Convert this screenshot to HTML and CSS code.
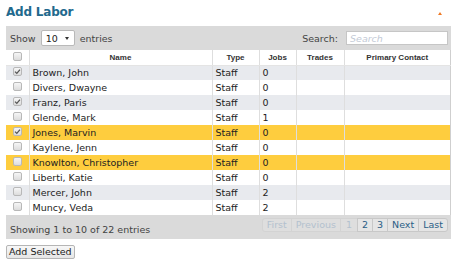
FILE: index.html
```html
<html>
    <head>
        <title>Add Labor</title>
        <link rel="stylesheet" href="styles.css">
    </head>

    <body>
        <div class="page">

            <div class="title-row">
                <h2 class="title">Add Labor</h2>
                <span class="caret"></span>
            </div>

            <div class="wrapper">

                <div class="controls">
                    <label class="length">Show
                        <span class="select-box"><select><option>10</option></select></span>
                        entries</label>
                    <label class="filter">Search: <input type="text" placeholder="Search"></label>
                </div>

                <table class="grid">
                    <colgroup>
                        <col style="width:23px">
                        <col style="width:183px">
                        <col style="width:47px">
                        <col style="width:37px">
                        <col style="width:48px">
                        <col>
                    </colgroup>
                    <thead>
                        <tr>
                            <th><span class="cb"></span></th>
                            <th>Name</th>
                            <th>Type</th>
                            <th>Jobs</th>
                            <th>Trades</th>
                            <th>Primary Contact</th>
                        </tr>
                    </thead>
                    <tbody>
                        <tr class="odd">
                            <td><span class="cb checked"><svg viewBox="0 0 9 9"><path d="M2 4.6 L3.8 6.4 L7 2.6"/></svg></span></td>
                            <td>Brown, John</td><td>Staff</td><td>0</td><td></td><td></td>
                        </tr>
                        <tr>
                            <td><span class="cb"></span></td>
                            <td>Divers, Dwayne</td><td>Staff</td><td>0</td><td></td><td></td>
                        </tr>
                        <tr class="odd">
                            <td><span class="cb checked"><svg viewBox="0 0 9 9"><path d="M2 4.6 L3.8 6.4 L7 2.6"/></svg></span></td>
                            <td>Franz, Paris</td><td>Staff</td><td>0</td><td></td><td></td>
                        </tr>
                        <tr>
                            <td><span class="cb"></span></td>
                            <td>Glende, Mark</td><td>Staff</td><td>1</td><td></td><td></td>
                        </tr>
                        <tr class="selected">
                            <td><span class="cb checked"><svg viewBox="0 0 9 9"><path d="M2 4.6 L3.8 6.4 L7 2.6"/></svg></span></td>
                            <td>Jones, Marvin</td><td>Staff</td><td>0</td><td></td><td></td>
                        </tr>
                        <tr>
                            <td><span class="cb"></span></td>
                            <td>Kaylene, Jenn</td><td>Staff</td><td>0</td><td></td><td></td>
                        </tr>
                        <tr class="selected">
                            <td><span class="cb"></span></td>
                            <td>Knowlton, Christopher</td><td>Staff</td><td>0</td><td></td><td></td>
                        </tr>
                        <tr>
                            <td><span class="cb"></span></td>
                            <td>Liberti, Katie</td><td>Staff</td><td>0</td><td></td><td></td>
                        </tr>
                        <tr class="odd">
                            <td><span class="cb"></span></td>
                            <td>Mercer, John</td><td>Staff</td><td>2</td><td></td><td></td>
                        </tr>
                        <tr>
                            <td><span class="cb"></span></td>
                            <td>Muncy, Veda</td><td>Staff</td><td>2</td><td></td><td></td>
                        </tr>
                    </tbody>
                </table>

                <div class="footer">
                    <div class="info">Showing 1 to 10 of 22 entries</div>
                    <div class="paging">
                        <span class="pg disabled">First</span>
                        <span class="pg disabled">Previous</span>
                        <span class="pg disabled current">1</span>
                        <span class="pg">2</span>
                        <span class="pg">3</span>
                        <span class="pg">Next</span>
                        <span class="pg">Last</span>
                    </div>
                </div>

            </div>

            <button class="add-btn">Add Selected</button>

        </div>
    </body>
</html>
```

FILE: styles.css
```css
body{
    margin: 0;
    background-color: white;
    font-family: "DejaVu Sans", Verdana, sans-serif;
    font-size: 9.5px;
    color: #222;
}

.page{
    padding-left: 6px;
    width: 445px;
}

.title-row{
    display: flex;
    justify-content: space-between;
    padding-top: 5px;
}

.title{
    margin: 0;
    font-size: 12px;
    line-height: 14px;
    letter-spacing: -0.2px;
    font-weight: bold;
    color: #22698d;
}

.caret{
    align-self: flex-end;
    margin: 0 9px 4px 0;
    width: 0;
    height: 0;
    border-left: 2.5px solid transparent;
    border-right: 2.5px solid transparent;
    border-bottom: 3px solid #ef7a26;
}

.wrapper{
    margin-top: 7px;
    background-color: #dadada;
}

.controls{
    display: flex;
    justify-content: space-between;
    align-items: center;
    height: 24px;
    padding: 0 3px 0 4px;
    color: #444;
}

.length{
    display: flex;
    align-items: center;
    gap: 5px;
}

.select-box{
    position: relative;
    display: inline-block;
}

.select-box select{
    appearance: none;
    width: 34px;
    height: 16px;
    padding: 0 0 0 4px;
    border: 1px solid #b9b9b9;
    border-radius: 2px;
    background: white;
    font-family: "DejaVu Sans", Verdana, sans-serif;
    font-size: 9.5px;
    color: #222;
}

.select-box::after{
    content: "";
    position: absolute;
    right: 6px;
    top: 7px;
    border-left: 2px solid transparent;
    border-right: 2px solid transparent;
    border-top: 3px solid #333;
}

.filter{
    display: flex;
    align-items: center;
    gap: 8px;
}

.filter input{
    width: 102px;
    height: 14px;
    padding: 0 3px;
    border: 1px solid #c6c6c6;
    background: white;
    outline: none;
    font-family: "DejaVu Sans", Verdana, sans-serif;
    font-size: 9.5px;
}

.filter input::placeholder{
    color: #c3cad6;
    font-style: italic;
}

.grid{
    width: 100%;
    table-layout: fixed;
    border-collapse: collapse;
    background-color: white;
    border-right: 1px solid #cfcfcf;
    font-family: "DejaVu Sans", Verdana, sans-serif;
    font-size: 9.5px;
    color: #222;
}

.grid th{
    height: 15px;
    padding: 0;
    font-family: "Liberation Sans", Arial, sans-serif;
    font-size: 8px;
    font-weight: bold;
    color: #333;
    text-align: center;
    border-left: 1px solid #dedede;
    border-bottom: 1px solid #e4e4e4;
}

.grid td{
    height: 15px;
    padding: 0 3px;
    border-left: 1px solid #dedede;
    white-space: nowrap;
    overflow: hidden;
    font-size: 9.5px;
    line-height: 12px;
}

.grid th:first-child,
.grid td:first-child{
    border-left: none;
    text-align: center;
    padding: 0;
}

.grid tr.odd td{
    background-color: #e8eaee;
}

.grid tr.selected td{
    background-color: #fecd3e;
}

.cb{
    display: inline-block;
    vertical-align: middle;
    width: 7px;
    height: 7px;
    border: 1px solid #b8b8b8;
    border-radius: 2px;
    background: linear-gradient(#f6f6f6, #dcdcdc);
    position: relative;
    top: -1px;
}

.cb svg{
    display: block;
    width: 9px;
    height: 9px;
    margin: -1px;
}

.cb svg path{
    fill: none;
    stroke: #555;
    stroke-width: 1.3;
}

.footer{
    display: flex;
    justify-content: space-between;
    align-items: flex-start;
    height: 24px;
    padding: 0 3px 0 4px;
}

.info{
    margin-top: 9px;
    color: #444;
}

.paging{
    display: flex;
    margin-top: 3px;
}

.pg{
    height: 12px;
    line-height: 12px;
    padding: 0 4px;
    border: 1px solid #c8c8c8;
    margin-left: -1px;
    background-color: #e5e5e5;
    color: #2b5e86;
}

.pg.disabled{
    border-color: #d3d3d3;
    background-color: #dedede;
    color: #b3c1ce;
}

.pg:first-child{
    border-radius: 3px 0 0 3px;
}

.pg:last-child{
    border-radius: 0 3px 3px 0;
}

.current{
    padding: 0 5px;
}

.add-btn{
    margin-top: 6px;
    height: 14px;
    padding: 0 2px;
    border: 1px solid #b5b5b5;
    border-radius: 2px;
    background: linear-gradient(#f7f7f7, #e6e6e6);
    font-family: "DejaVu Sans", Verdana, sans-serif;
    font-size: 9.5px;
    line-height: 12px;
    color: #222;
}
```
